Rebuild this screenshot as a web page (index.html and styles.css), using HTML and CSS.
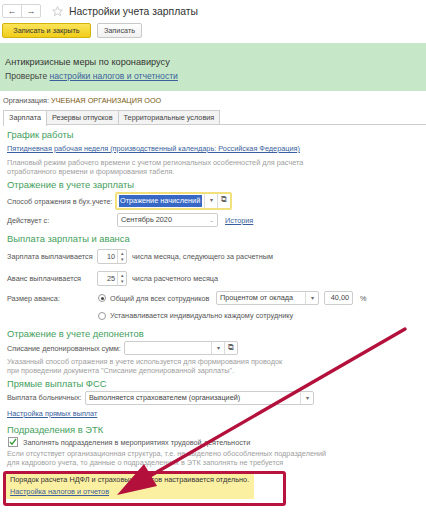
FILE: index.html
```html
<!DOCTYPE html>
<html lang="ru">
<head>
    <meta charset="UTF-8">
    <title>Настройки учета зарплаты</title>
    <link rel="stylesheet" href="styles.css">
</head>
<body>
    <div class="topbar">
        <div class="nav">
            <span class="nav-btn">&#8592;</span><span class="nav-btn">&#8594;</span>
        </div>
        <svg class="star" width="11" height="11" viewBox="0 0 12 12"><path d="M6 .8l1.5 3.4 3.7.3-2.8 2.4.9 3.6L6 8.6 2.7 10.5l.9-3.6L.8 4.5l3.7-.3z" fill="none" stroke="#c4c4c4" stroke-width=".9"/></svg>
        <span class="title">Настройки учета зарплаты</span>
    </div>
    <div class="actions">
        <button class="btn btn-main">Записать и закрыть</button>
        <button class="btn btn-save">Записать</button>
    </div>

    <div class="banner">
        <div class="banner-title">Антикризисные меры по коронавирусу</div>
        <div class="banner-text">Проверьте <a href="#">настройки налогов и отчетности</a></div>
    </div>

    <div class="content">
        <div class="org">Организация: <span class="org-name">УЧЕБНАЯ ОРГАНИЗАЦИЯ ООО</span></div>

        <div class="tabs">
            <span class="tab active">Зарплата</span>
            <span class="tab">Резервы отпусков</span>
            <span class="tab">Территориальные условия</span>
        </div>

        <div class="page">
            <div class="section-title">График работы</div>
            <a class="link link-block" href="#">Пятидневная рабочая неделя (производственный календарь: Российская Федерация)</a>
            <p class="note">Плановый режим рабочего времени с учетом региональных особенностей для расчета<br>отработанного времени и формирования табеля.</p>

            <div class="section-title">Отражение в учете зарплаты</div>
            <div class="row row-focus">
                <span class="label w-acc">Способ отражения в бух.учете:</span>
                <span class="field field-focus">
                    <span class="value"><span class="selected">Отражение начислений п</span></span>
                    <span class="drop">&#9662;</span>
                    <span class="open">&#10697;</span>
                </span>
            </div>
            <div class="row row-date">
                <span class="label w-acc2">Действует с:</span>
                <span class="field w-date">
                    <span class="value">Сентябрь 2020</span>
                    <span class="drop">...</span>
                </span>
                <a class="link" href="#">История</a>
            </div>

            <div class="section-title">Выплата зарплаты и аванса</div>
            <div class="row row-pay">
                <span class="label w-pay">Зарплата выплачивается</span>
                <span class="spin"><span class="num">10</span><span class="arrows">&#9652;<br>&#9662;</span></span>
                <span class="text">числа месяца, следующего за расчетным</span>
            </div>
            <div class="row row-adv">
                <span class="label w-pay">Аванс выплачивается</span>
                <span class="spin"><span class="num">25</span><span class="arrows">&#9652;<br>&#9662;</span></span>
                <span class="text">числа расчетного месяца</span>
            </div>
            <div class="row row-size">
                <span class="label w-pay">Размер аванса:</span>
                <span class="radio checked"></span>
                <span class="text w-common">Общий для всех сотрудников</span>
                <span class="field w-kind">
                    <span class="value">Процентом от оклада</span>
                    <span class="drop">&#9662;</span>
                </span>
                <span class="field w-pct"><span class="value num-right">40,00</span></span>
                <span class="text">%</span>
            </div>
            <div class="row row-ind">
                <span class="label w-pay"></span>
                <span class="radio"></span>
                <span class="text">Устанавливается индивидуально каждому сотруднику</span>
            </div>

            <div class="section-title">Отражение в учете депонентов</div>
            <div class="row row-dep">
                <span class="label w-deplabel">Списание депонированных сумм:</span>
                <span class="field w-dep">
                    <span class="value"></span>
                    <span class="drop">&#9662;</span>
                    <span class="open">&#10697;</span>
                </span>
            </div>
            <p class="note note-dep">Указанный способ отражения в учете используется для формирования проводок<br>при проведении документа "Списание депонированной зарплаты".</p>

            <div class="section-title">Прямые выплаты ФСС</div>
            <div class="row row-fss">
                <span class="label w-fsslabel">Выплата больничных:</span>
                <span class="field w-fss">
                    <span class="value">Выполняется страхователем (организацией)</span>
                    <span class="drop">&#9662;</span>
                </span>
            </div>
            <a class="link link-block link-fss" href="#">Настройка прямых выплат</a>

            <div class="section-title">Подразделения в ЭТК</div>
            <div class="row check-row">
                <span class="check">
                    <svg width="8" height="8" viewBox="0 0 8 8"><path d="M1 4l2 2.2L7 1" fill="none" stroke="#3a9a3a" stroke-width="1.3"/></svg>
                </span>
                <span class="text">Заполнять подразделения в мероприятиях трудовой деятельности</span>
            </div>
            <p class="note note-etk">Если отсутствует организационная структура, т.е. не выделено обособленных подразделений<br>для кадрового учета, то данные о подразделениях в ЭТК заполнять не требуется</p>

            <div class="callout">
                <div class="hint">
                    <div class="hint-text">Порядок расчета НДФЛ и страховых взносов настраивается отдельно.</div>
                    <a class="link link-block" href="#">Настройка налогов и отчетов</a>
                </div>
            </div>
        </div>
    </div>

    <svg class="arrow" width="426" height="515" viewBox="0 0 426 515">
        <line x1="405" y1="329" x2="150" y2="476" stroke="#b3103c" stroke-width="3.4" stroke-linecap="round"/>
        <path d="M117 495 L144 464 L157 486 Z" fill="#b3103c"/>
    </svg>
</body>
</html>
```

FILE: styles.css
```css
body {
    margin: 0;
    font-family: "Liberation Sans", Arial, sans-serif;
    font-size: 7.3px;
    color: #4a4a4a;
    background: #fff;
    width: 426px;
    height: 515px;
    overflow: hidden;
    position: relative;
}

a { color: #3b5f9c; }

/* top bar */
.topbar { display: flex; align-items: center; height: 22px; padding-left: 2px; box-sizing: border-box; }
.nav { display: flex; border: 1px solid #d6d6d6; border-radius: 2px; height: 14px; box-sizing: border-box; }
.nav-btn { width: 18px; text-align: center; font-size: 9px; line-height: 12px; color: #555; }
.nav-btn + .nav-btn { border-left: 1px solid #d6d6d6; }
.star { margin-left: 11px; }
.title { margin-left: 6px; font-size: 10.4px; color: #333; }

.actions { display: flex; gap: 6px; padding: 1px 0 0 2px; height: 21px; box-sizing: border-box; }
.btn {
    font-family: inherit;
    font-size: 7.3px;
    height: 15px;
    padding: 0;
    border: 1px solid #c9c9c9;
    border-radius: 2px;
    background: linear-gradient(#fff, #f0f0f0);
    color: #444;
}
.btn-main { width: 89px; background: linear-gradient(#fbe45a, #f0cd18); border-color: #d3b209; color: #333; }
.btn-save { width: 45px; }

/* green banner */
.banner { background: #c7e8c8; height: 48px; padding: 13px 0 0 5px; box-sizing: border-box; }
.banner-title { font-size: 9.2px; color: #333; line-height: 12px; }
.banner-text { font-size: 8.6px; color: #444; line-height: 12px; margin-top: 2px; }

.content { padding: 5px 0 0 3px; }
.org { line-height: 10px; color: #555; }
.org-name { color: #7a5a12; }

/* tabs */
.tabs { display: flex; margin-top: 4px; border-bottom: 1px solid #cdcdcd; height: 14px; }
.tab {
    padding: 0 5px;
    line-height: 14px;
    border: 1px solid #cdcdcd;
    border-bottom: none;
    background: #f3f3f3;
    color: #444;
    margin-right: -1px;
}
.tab.active { background: #fff; height: 15px; }

.page { padding: 3px 0 0 4px; }
.section-title { color: #44a05c; font-size: 9.4px; line-height: 13px; margin-top: 2px; }
.page > .section-title:first-child { margin-top: 0; }
.link-block { display: block; line-height: 10px; margin-top: 3px; }
.link-fss { margin-top: 4px; margin-bottom: 4px; }
.note { margin: 4px 0 0; color: #a0a0a0; line-height: 9px; }
.note-dep { margin-top: 1px; margin-bottom: 2px; }
.note-etk { margin-top: 1px; }

/* form rows */
.row { display: flex; align-items: center; }
.row-focus { height: 18px; margin-top: 1px; }
.row-date { height: 20px; }
.row-pay { height: 21px; margin-top: 1px; }
.row-adv { height: 23px; }
.row-size { height: 16px; }
.row-ind { height: 19px; }
.row-dep { height: 16px; }
.row-fss { height: 15px; }
.label { color: #555; flex: none; white-space: nowrap; }
.w-acc { width: 108px; }
.w-acc2 { width: 110px; }
.w-pay { width: 90px; }
.w-deplabel { width: 117px; }
.w-fsslabel { width: 78px; }
.text { color: #555; white-space: nowrap; }

.field {
    display: flex;
    height: 14px;
    border: 1px solid #cdcdcd;
    border-radius: 2px;
    background: #fff;
    box-sizing: border-box;
    flex: none;
}
.field .value { flex: 1; padding: 0 3px; line-height: 12px; white-space: nowrap; overflow: hidden; color: #444; }
.field .drop, .field .open { width: 12px; border-left: 1px solid #dcdcdc; text-align: center; line-height: 12px; color: #666; font-size: 6px; }
.field .open { font-size: 8px; }
.field-focus { border: 2px solid #f1e07c; width: 117px; height: 18px; }
.field-focus .value { padding: 1px 2px; }
.selected { display: block; background: #3768c5; color: #fff; line-height: 12px; padding: 0 1px; white-space: nowrap; overflow: hidden; }
.w-date { width: 101px; margin-right: 7px; }
.w-date .drop { border-left: none; letter-spacing: -1px; }
.w-kind { width: 103px; margin-left: 4px; }
.w-pct { width: 29px; margin: 0 7px 0 5px; }
.num-right { text-align: right; }
.w-common { width: 102px; }
.w-dep { width: 114px; }
.w-fss { width: 229px; }

.spin {
    display: flex;
    width: 30px;
    height: 15px;
    border: 1px solid #cdcdcd;
    border-radius: 2px;
    margin-right: 5px;
    box-sizing: border-box;
}
.spin .num { flex: 1; text-align: right; padding-right: 2px; line-height: 13px; }
.spin .arrows { width: 8px; border-left: 1px solid #dcdcdc; font-size: 5px; line-height: 6px; text-align: center; color: #666; }

.radio {
    width: 8px;
    height: 8px;
    border: 1px solid #9a9a9a;
    border-radius: 50%;
    box-sizing: border-box;
    margin: 0 4px 0 1px;
    position: relative;
    flex: none;
}
.radio.checked::after {
    content: "";
    position: absolute;
    left: 1.5px;
    top: 1.5px;
    width: 3px;
    height: 3px;
    border-radius: 50%;
    background: #444;
}

.check-row { height: 12px; }
.check {
    width: 8px;
    height: 8px;
    border: 1px solid #9a9a9a;
    margin: 0 5px 0 1px;
    display: flex;
}

/* framed hint at the bottom */
.callout {
    width: 283px;
    height: 35px;
    margin: 4px 0 0 -4px;
    border: 3px solid #b8123e;
    border-radius: 3px;
    box-sizing: border-box;
}
.hint { width: 248px; background: #fbf0a2; padding: 1px 0 2px 4px; color: #333; box-sizing: border-box; }
.hint-text { line-height: 10px; }
.hint .link-block { margin-top: 2px; }

.arrow { position: absolute; left: 0; top: 0; pointer-events: none; }
```
